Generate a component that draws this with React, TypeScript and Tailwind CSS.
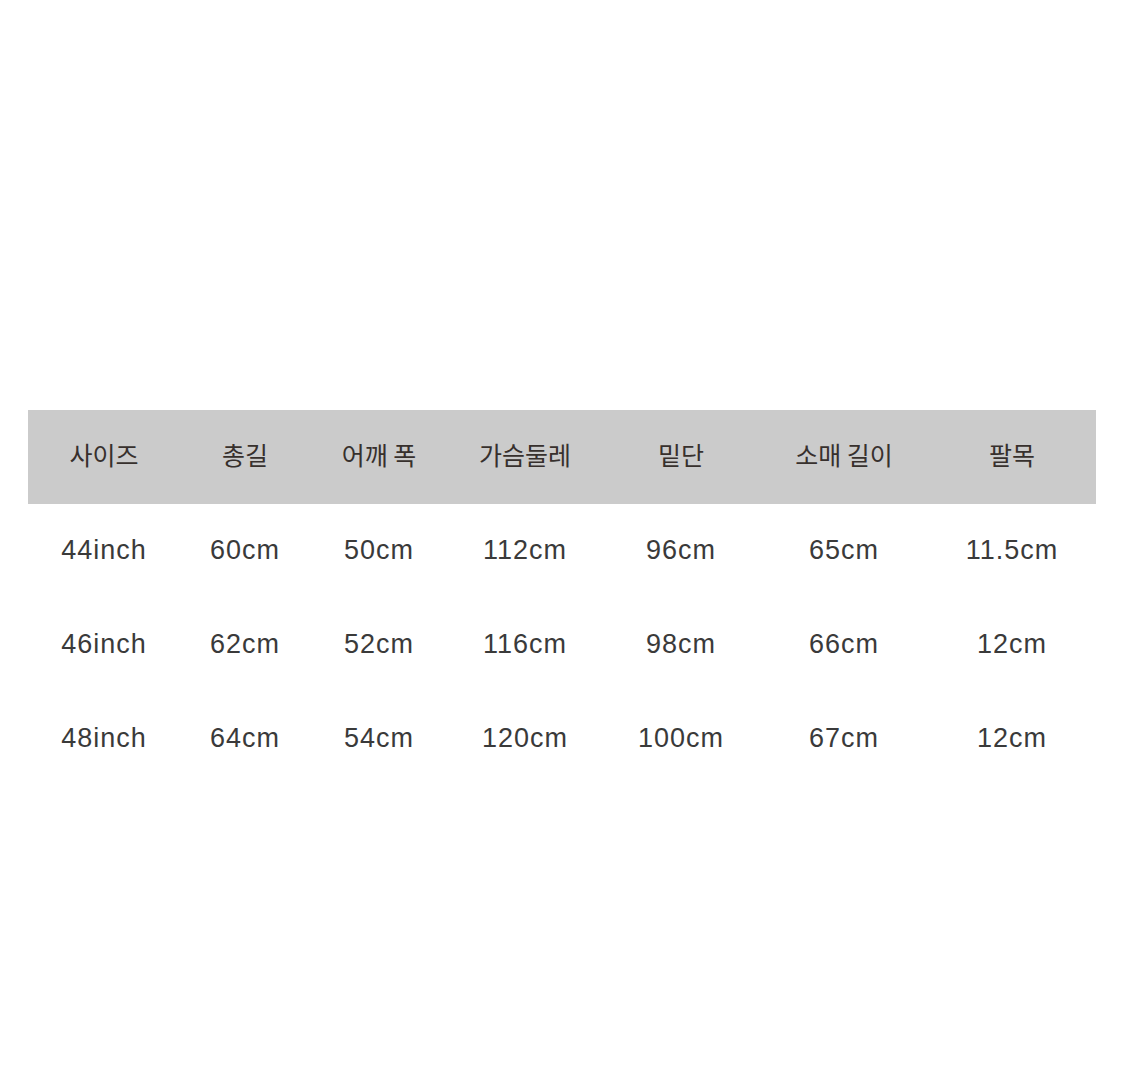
import React from 'react';

const columns = ['w-[152px]', 'w-[130px]', 'w-[138px]', 'w-[154px]', 'w-[158px]', 'w-[168px]', 'w-[168px]'];

const headers = ['사이즈', '총길', '어깨 폭', '가슴둘레', '밑단', '소매 길이', '팔목'];

const rows = [
  ['44inch', '60cm', '50cm', '112cm', '96cm', '65cm', '11.5cm'],
  ['46inch', '62cm', '52cm', '116cm', '98cm', '66cm', '12cm'],
  ['48inch', '64cm', '54cm', '120cm', '100cm', '67cm', '12cm'],
];

export default function App() {
  return (
    <div className="min-h-[1092px] bg-white pt-[410px] px-[28px]">
      <div className="w-[1068px]">
        {/* Header */}
        <div className="flex h-[94px] items-center bg-[#cbcbcb] pb-[5px]">
          {headers.map((h, i) => (
            <div
              key={h}
              className={`${columns[i]} text-center text-[25px] text-[#37302d] [font-family:'Noto_Sans_CJK_KR',sans-serif]`}
            >
              {h}
            </div>
          ))}
        </div>

        {/* Rows */}
        <div className="-mt-px">
          {rows.map((row) => (
            <div key={row[0]} className="flex h-[94px] items-center">
              {row.map((cell, i) => (
                <div
                  key={i}
                  className={`${columns[i]} text-center text-[27px] tracking-[1px] text-[#3a3a3a] [font-family:'Liberation_Sans',Arial,sans-serif]`}
                >
                  {cell}
                </div>
              ))}
            </div>
          ))}
        </div>
      </div>
    </div>
  );
}
